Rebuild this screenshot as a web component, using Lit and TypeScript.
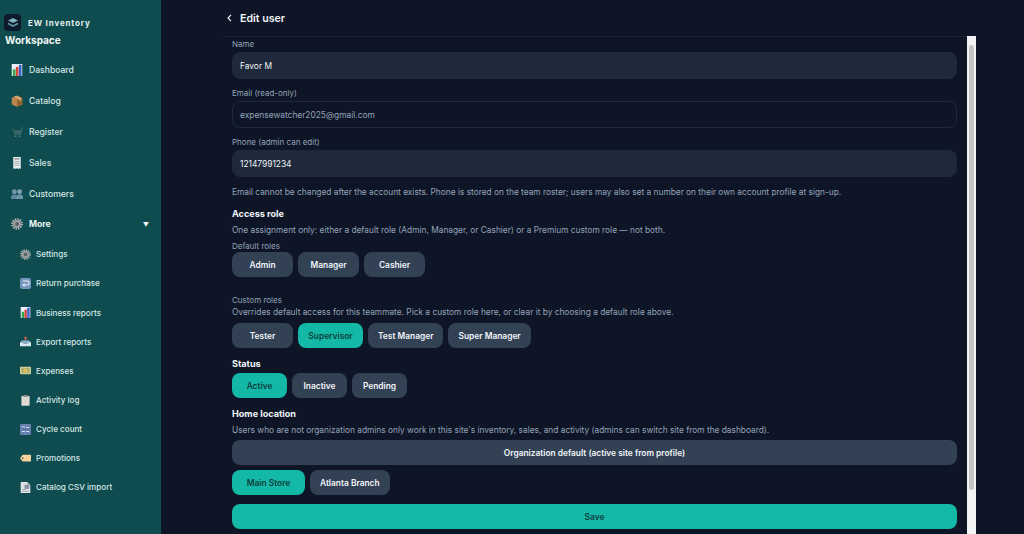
import { LitElement, html, css, svg } from 'lit';
import { customElement } from 'lit/decorators.js';

const chart = svg`<rect x="1" y="0" width="14" height="16" fill="#e8eef3"/><rect x="2.500" y="7" width="3.500" height="9" fill="#2fa84f"/><rect x="6.500" y="4" width="3.500" height="12" fill="#d8433c"/><rect x="10.500" y="1" width="3.500" height="15" fill="#3a63c9"/>`;
const gear = svg`<circle cx="8" cy="8" r="6" fill="none" stroke="#b0b4b4" stroke-width="3.600" stroke-dasharray="1.800 1.300"/><circle cx="8" cy="8" r="5.200" fill="#9aa0a1"/><circle cx="8" cy="8" r="2.600" fill="#56625f"/>`;

const icons: Record<string, unknown> = {
  chart,
  gear,
  box: svg`<path d="M8 .5l7 3v9L8 15.500 1 12.500v-9z" fill="#bd8650"/><path d="M8 7v8.500l7-3v-9z" fill="#93632f"/><path d="M4.500 2l7 3.200v3l1.500-.7V4.300L6 1.300z" fill="#e6c492"/>`,
  cart: svg`<path d="M1 4.500h2.500l2 6.500h7L15 1.500" fill="none" stroke="#4f7470" stroke-width="1.200"/><path d="M4.500 6h9l-1.500 4H5.500z" fill="#3f6c68"/><circle cx="6" cy="13.500" r="1.300" fill="#587a76"/><circle cx="11.500" cy="13.500" r="1.300" fill="#587a76"/>`,
  receipt: svg`<path d="M3 0h10v16l-1.700-1-1.600 1-1.700-1-1.700 1-1.600-1L3 16z" fill="#e8eeee"/><path d="M4.500 2.500h7" stroke="#7c8686" stroke-width="1.600"/><path d="M4.500 6h7M4.500 8.500h7M4.500 11h7" stroke="#98a2a2" stroke-width="1"/>`,
  people: svg`<circle cx="4.500" cy="5" r="3.300" fill="#6f95ad"/><circle cx="11.500" cy="5" r="3.300" fill="#7fa0b3"/><path d="M-.5 14.500c0-4.500 2-6 5-6s5 1.500 5 6z" fill="#5f859c"/><path d="M6.500 14.500c0-4.500 2-6 5-6s5 1.500 5 6z" fill="#6f95ad"/>`,
  back: svg`<rect x="0" y="0" width="16" height="16" rx="3" fill="#7596bf"/><path d="M4.500 4.500h6a2.800 2.800 0 010 5.600h-6M6.600 8L4.500 10.100 6.600 12.200" fill="none" stroke="#f0f4f9" stroke-width="1.500"/>`,
  tray: svg`<path d="M0 9h4.500l1 2h5l1-2H16v6H0z" fill="#dbe6ee"/><path d="M3 6.500h10L16 9h-4.500l-1 2h-5l-1-2H0z" fill="#8fb3cd"/><path d="M8 1.500v5" stroke="#b75a55" stroke-width="2.200"/><path d="M5 3.800L8 .5l3 3.300z" fill="#b75a55"/>`,
  money: svg`<rect x="0" y="2.500" width="16" height="11" rx="1" fill="#d0cf95"/><rect x="2" y="4.500" width="12" height="7" fill="#a7ae74"/><circle cx="8" cy="8" r="3" fill="#e6c250"/>`,
  clip: svg`<rect x="2" y="1.500" width="12" height="14" rx="1" fill="#dcdad3"/><rect x="5" y="0" width="6" height="3" rx=".5" fill="#8b8f88"/>`,
  abacus: svg`<rect x="0" y="0" width="16" height="16" rx="2" fill="#6a85b3"/><path d="M5 1v14M11 1v14M1 8h14" stroke="#4c6593" stroke-width=".8"/><path d="M3 4h4M9 5h4M3 11h4M9 11h4" stroke="#dfe8f4" stroke-width="1.500"/>`,
  tag: svg`<path d="M4 2.500h12v10H4L0 7.500z" fill="#f6d199"/><circle cx="4" cy="7.500" r="1.100" fill="#0f4c4f"/>`,
  doc: svg`<path d="M1 0h9.500L15 4.500V16H1z" fill="#dde3e6"/><path d="M10.500 0L15 4.500h-4.500z" fill="#a4aeb5"/><rect x="6.500" y="4" width="7" height="6" fill="#8794a8"/><path d="M3 11h6M3 13.500h10" stroke="#929ba1" stroke-width="1"/>`,
};

const icon = (name: string) => html`<svg class="ico" viewBox="0 0 16 16">${icons[name]}</svg>`;

const mainNav = [
  ['chart', 'Dashboard'],
  ['box', 'Catalog'],
  ['cart', 'Register'],
  ['receipt', 'Sales'],
  ['people', 'Customers'],
];

const subNav = [
  ['gear', 'Settings'],
  ['back', 'Return purchase'],
  ['chart', 'Business reports'],
  ['tray', 'Export reports'],
  ['money', 'Expenses'],
  ['clip', 'Activity log'],
  ['abacus', 'Cycle count'],
  ['tag', 'Promotions'],
  ['doc', 'Catalog CSV import'],
];

@customElement('app-root')
export class AppRoot extends LitElement {
  static styles = css`
    :host {
      display: flex;
      width: 100%;
      height: 534px;
      overflow: hidden;
      background: #0d1526;
      font-family: Inter, 'Liberation Sans', sans-serif;
      color: #f1f5f9;
    }

    /* sidebar */
    .side {
      width: 161px;
      flex: none;
      box-sizing: border-box;
      padding: 14px 0 0 4px;
      background: #0f4c4f;
      color: #d5e6e4;
    }
    .brand {
      display: flex;
      align-items: center;
      gap: 7px;
      height: 17px;
    }
    .logo {
      width: 17px;
      height: 17px;
      border-radius: 4px;
      background: #0d1a2c;
      display: flex;
      align-items: center;
      justify-content: center;
    }
    .logo svg {
      width: 10px;
      height: 9px;
    }
    .brand b {
      font-size: 8px;
      font-weight: 700;
      letter-spacing: 0.85px;
      color: #e6f0ef;
    }
    .ws {
      margin: 2px 0 0 1px;
      font-size: 10px;
      line-height: 14px;
      font-weight: 700;
      color: #f2f7f6;
    }
    .nav {
      margin-top: 8px;
      padding-left: 7px;
    }
    .row {
      display: flex;
      align-items: center;
      height: 30.8px;
      gap: 6px;
      font-size: 8.6px;
      font-weight: 500;
    }
    .ico {
      width: 12px;
      height: 12px;
      flex: none;
    }
    .more {
      font-weight: 700;
      color: #eef6f5;
    }
    .caret {
      margin-left: auto;
      margin-right: 12px;
      font-size: 6px;
    }
    .sub {
      padding-left: 9px;
    }
    .sub .row {
      height: 29.15px;
      gap: 5px;
      font-size: 8.1px;
    }
    .sub .ico {
      width: 11px;
      height: 11px;
    }

    /* main column */
    .main {
      margin-left: 61px;
      width: 754px;
      flex: none;
      display: flex;
      flex-direction: column;
    }
    .head {
      height: 36px;
      flex: none;
      display: flex;
      align-items: center;
      gap: 8px;
      padding-left: 5px;
      border-bottom: 1px solid #1a2436;
      margin-right: 9px;
    }
    .head svg {
      width: 5px;
      height: 8px;
    }
    .head h1 {
      margin: 0;
      font-size: 10.6px;
      font-weight: 600;
    }
    .scroll {
      flex: 1;
      display: flex;
      min-height: 0;
      margin-top: -1px;
    }
    .form {
      flex: 1;
      min-width: 0;
      box-sizing: border-box;
      padding: 2px 10px 0;
    }
    .bar {
      width: 9px;
      flex: none;
      background: #f2f3f4;
      box-sizing: border-box;
      padding: 9px 2px 0;
    }
    .bar i {
      display: block;
      height: 445px;
      border-radius: 3px;
      background: #c3c4c6;
    }

    label,
    .cap {
      display: block;
      font-size: 8px;
      line-height: 12px;
      color: #94a3b8;
    }
    .field {
      margin-top: 2px;
      height: 27px;
      box-sizing: border-box;
      border-radius: 8px;
      padding: 0 7px;
      display: flex;
      align-items: center;
      background: #1e293b;
      border: 1px solid #1e293b;
      font-size: 8.4px;
      margin-bottom: 8px;
    }
    .field.ro {
      background: transparent;
      color: #94a3b8;
    }
    p {
      margin: 0;
      font-size: 8.33px;
      line-height: 12px;
      color: #94a3b8;
    }
    h2 {
      margin: 0;
      font-size: 9.1px;
      line-height: 12px;
      font-weight: 700;
    }
    .btns {
      display: flex;
      gap: 5px;
    }
    button {
      all: unset;
      box-sizing: border-box;
      height: 25px;
      padding: 0 10px;
      border-radius: 8px;
      background: #334155;
      color: #f1f5f9;
      font-size: 8.4px;
      font-weight: 600;
      text-align: center;
      display: flex;
      align-items: center;
      justify-content: center;
    }
    button.on {
      background: #14b8a6;
      color: #0b3f3f;
    }
    .w61 button {
      min-width: 61px;
    }
    .w61 button.sup {
      min-width: 65px;
    }
    .w55 button {
      min-width: 55px;
    }
    .w73 button {
      min-width: 73px;
    }
    button.wide {
      width: 100%;
    }
    .hint {
      margin-top: 9px;
    }
    .mt3 {
      margin-top: 3px;
    }
    .mt4 {
      margin-top: 4px;
    }
    .mt5 {
      margin-top: 5px;
    }
    .mt9 {
      margin-top: 9px;
    }
    .mt10 {
      margin-top: 10px;
    }
    .custom {
      margin-top: 17px;
    }
  `;

  render() {
    return html`
      <aside class="side">
        <div class="brand">
          <span class="logo">
            <svg viewBox="0 0 10 9"><path d="M5 0l5 2.500-5 2.500L0 2.500z" fill="#7fb2bd"/><path d="M0 4.500l5 2.500 5-2.500v2L5 9 0 6.500z" fill="#5d8f9b"/></svg>
          </span>
          <b>EW Inventory</b>
        </div>
        <div class="ws">Workspace</div>
        <nav class="nav">
          ${mainNav.map(([i, t]) => html`<div class="row">${icon(i)}<span>${t}</span></div>`)}
          <div class="row more">${icon('gear')}<span>More</span><span class="caret">▼</span></div>
          <div class="sub">
            ${subNav.map(([i, t]) => html`<div class="row">${icon(i)}<span>${t}</span></div>`)}
          </div>
        </nav>
      </aside>
      <main class="main">
        <header class="head">
          <svg viewBox="0 0 5 8"><path d="M4 .8L1 4l3 3.200" fill="none" stroke="#f1f5f9" stroke-width="1.200"/></svg>
          <h1>Edit user</h1>
        </header>
        <div class="scroll">
          <div class="form">
            <label>Name</label>
            <div class="field">Favor M</div>
            <label>Email (read-only)</label>
            <div class="field ro">expensewatcher2025@gmail.com</div>
            <label>Phone (admin can edit)</label>
            <div class="field">12147991234</div>
            <p class="hint">Email cannot be changed after the account exists. Phone is stored on the team roster; users may also set a number on their own account profile at sign-up.</p>

            <h2 class="mt10">Access role</h2>
            <p class="mt4">One assignment only: either a default role (Admin, Manager, or Cashier) or a Premium custom role — not both.</p>
            <span class="cap mt4">Default roles</span>
            <div class="btns w61">
              <button>Admin</button><button>Manager</button><button>Cashier</button>
            </div>
            <span class="cap custom">Custom roles</span>
            <p>Overrides default access for this teammate. Pick a custom role here, or clear it by choosing a default role above.</p>
            <div class="btns w61 mt5">
              <button>Tester</button><button class="on sup">Supervisor</button><button>Test Manager</button><button>Super Manager</button>
            </div>
            <h2 class="mt10">Status</h2>
            <div class="btns w55 mt3">
              <button class="on">Active</button><button>Inactive</button><button>Pending</button>
            </div>
            <h2 class="mt10">Home location</h2>
            <p class="mt4">Users who are not organization admins only work in this site's inventory, sales, and activity (admins can switch site from the dashboard).</p>
            <button class="wide mt4">Organization default (active site from profile)</button>
            <div class="btns w73 mt5">
              <button class="on">Main Store</button><button>Atlanta Branch</button>
            </div>
            <button class="wide on mt9">Save</button>
          </div>
          <div class="bar"><i></i></div>
        </div>
      </main>
    `;
  }
}
